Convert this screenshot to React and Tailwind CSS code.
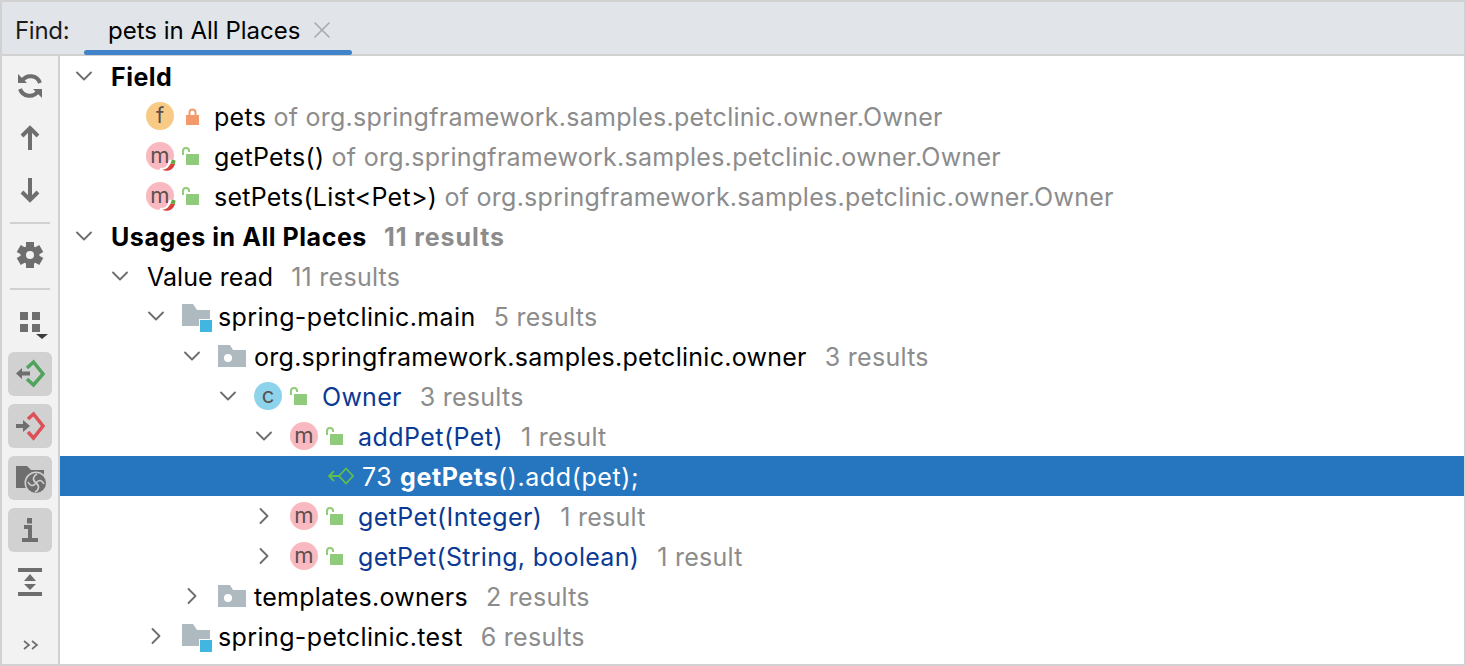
import React from 'react';
import { ChevronDown, ChevronRight, X } from 'lucide-react';

const Chevron = ({ open }) => (
  <span className="w-[51px] pl-[10px] -mt-[4px] shrink-0 flex items-center text-[#6e6e6e]">
    {open ? <ChevronDown size={28} strokeWidth={1.6} /> : <ChevronRight size={28} strokeWidth={1.6} />}
  </span>
);

const Pepper = () => (
  <svg className="absolute left-[13px] top-[13px]" width="18" height="18" viewBox="0 0 18 18">
    <path d="M1 14 C6 15 10 12 11 6 L16 6 C17 13 9 19 1 14Z" fill="#fff" stroke="#fff" strokeWidth="2.5" />
    <path d="M3 14.5 C7 15 10 12 11.5 8.5 L16 9 C15 14 9 18 3 14.5Z" fill="#d9433f" />
    <path d="M11.5 8.5 L13 4.5 L16.5 5.5 L16 9Z" fill="#62a845" />
  </svg>
);

const Badge = ({ letter, color, pepper }) => (
  <span className={`relative w-[28px] h-[28px] -ml-[1px] -mt-[4px] rounded-full shrink-0 flex items-center justify-center text-[#5a4f4f] text-[22px] tracking-normal leading-none pb-[3px] ${color}`}>
    {letter}
    {pepper && <Pepper />}
  </span>
);

const Lock = ({ closed }) => closed ? (
  <svg className="ml-[12px] -mt-[4px] shrink-0" width="13" height="17" viewBox="0 0 13 17">
    <path d="M3.5 8V4.5a3 3 0 0 1 6 0V8" fill="none" stroke="#f39a6d" strokeWidth="2" />
    <rect x="0" y="7" width="13" height="10" fill="#f39a6d" />
  </svg>
) : (
  <svg className="ml-[8px] -mt-[4px] shrink-0" width="17" height="18" viewBox="0 0 17 18">
    <path d="M1 8V4a3 3 0 0 1 6 0V5" fill="none" stroke="#8fcb7a" strokeWidth="2" />
    <rect x="4" y="7" width="13" height="11" fill="#8fcb7a" />
  </svg>
);

const ModuleIcon = () => (
  <svg className="shrink-0 -ml-[1px] -mt-[4px]" width="30" height="32" viewBox="0 0 30 32">
    <path d="M0 4H11L15 10H28V26H0Z" fill="#aeb9c0" />
    <rect x="17" y="19" width="13" height="13" fill="#fff" />
    <rect x="18" y="20" width="12" height="12" fill="#40b6e0" />
  </svg>
);

const PackageIcon = () => (
  <svg className="shrink-0 -ml-[1px] -mt-[4px]" width="28" height="22" viewBox="0 0 28 22">
    <path d="M0 0H12L15 5H28V22H0Z" fill="#aeb9c0" />
    <circle cx="10" cy="13" r="4" fill="#fff" />
  </svg>
);

const Gray = ({ children }) => <span className="text-[#8c8c8c]">{children}</span>;

const Row = ({ indent, open, children, selected }) => (
  <div className={`h-[40px] pt-[4px] flex items-center whitespace-pre ${indent} ${selected ? 'bg-[#2675bf] text-white' : ''}`}>
    {open === undefined ? <span className="w-[51px] shrink-0" /> : <Chevron open={open} />}
    {children}
  </div>
);

const ToolBtn = ({ active, children }) => (
  <div className={`w-[44px] h-[44px] rounded-[6px] ${active ? 'bg-[#d1d1d1]' : ''}`}>
    <svg width="44" height="44" viewBox="0 0 44 44" fill="#6e6e6e">{children}</svg>
  </div>
);

const Sep = ({ className }) => <div className={`w-[40px] h-[2px] bg-[#d1d1d1] ${className}`} />;

const Sidebar = () => (
  <div className="w-[56px] shrink-0 border-r-2 border-[#d1d1d1] bg-[#f2f2f2] box-content flex flex-col items-center pt-[8px] gap-2">
    <ToolBtn>
      <g transform="translate(10 10)">
        <path d="M4 7A10 10 0 0 1 22 9" fill="none" stroke="#6e6e6e" strokeWidth="4" />
        <path d="M0 0V9H9Z" />
        <path d="M20 17A10 10 0 0 1 2 15" fill="none" stroke="#6e6e6e" strokeWidth="4" />
        <path d="M24 24V15H15Z" />
      </g>
    </ToolBtn>
    <ToolBtn>
      <path d="M22 34V13M14 20L22 12L30 20" fill="none" stroke="#6e6e6e" strokeWidth="4" />
    </ToolBtn>
    <ToolBtn>
      <path d="M22 10V31M14 24L22 32L30 24" fill="none" stroke="#6e6e6e" strokeWidth="4" />
    </ToolBtn>
    <Sep className="mt-[2px] mb-[1px]" />
    <ToolBtn>
      <rect x="18" y="9" width="8" height="26" />
      <rect x="18" y="9" width="8" height="26" transform="rotate(60 22 22)" />
      <rect x="18" y="9" width="8" height="26" transform="rotate(120 22 22)" />
      <circle cx="22" cy="22" r="9.5" />
      <circle cx="22" cy="22" r="4" fill="#f2f2f2" />
    </ToolBtn>
    <Sep className="mt-[3px] mb-[2px]" />
    <ToolBtn>
      <rect x="12" y="12" width="8" height="8" />
      <rect x="24" y="12" width="8" height="8" />
      <rect x="12" y="24" width="8" height="8" />
      <rect x="24" y="24" width="8" height="8" />
      <path d="M28 34H40L34 39Z" fill="#3c3c3c" />
    </ToolBtn>
    <ToolBtn active>
      <path d="M19 16L25.5 10L35 22L25.5 33L19 27" fill="none" stroke="#4fa35d" strokeWidth="3.5" />
      <path d="M8 21.5L14 16V19.5H22V23.5H14V27Z" />
    </ToolBtn>
    <ToolBtn active>
      <path d="M20 15L25.5 10L35 22L25.5 34L20 28" fill="none" stroke="#dc5158" strokeWidth="3.5" />
      <path d="M8 20H15V16L22 22L15 28V24H8Z" />
    </ToolBtn>
    <ToolBtn active>
      <path d="M8 10H19L23 14H36V32H8Z" />
      <circle cx="28" cy="27" r="11.5" fill="#d1d1d1" />
      <circle cx="28" cy="27" r="10" />
      <path d="M28 27C24 24 25 20 29 18M28 27C31 23 34 24 36 28M28 27C32 30 31 34 27 36M28 27C25 31 22 30 20 26" fill="none" stroke="#d1d1d1" strokeWidth="1.6" />
    </ToolBtn>
    <ToolBtn active>
      <rect x="19" y="10" width="5" height="5.5" />
      <path d="M16 17H24V30H30V34H14V30H20V21H16Z" />
    </ToolBtn>
    <ToolBtn>
      <rect x="10" y="8" width="24" height="4" />
      <path d="M22 14L28 21H16Z" />
      <path d="M22 30L28 24H16Z" />
      <rect x="10" y="32" width="24" height="4" />
    </ToolBtn>
    <div className="mt-[27px] ml-[2px]">
      <svg width="16" height="12" viewBox="0 0 16 12" fill="none" stroke="#6e6e6e" strokeWidth="1.7">
        <path d="M1 2L6 6L1 10M9 2L14 6L9 10" />
      </svg>
    </div>
  </div>
);

const results = 'ml-[18px]';

const App = () => (
  <div className="w-[1466px] h-[666px] bg-white border-2 border-[#d1d1d1] flex flex-col overflow-hidden text-[25px] tracking-[0.27px] text-black font-['Inter','Liberation_Sans',sans-serif]">
    <div className="h-[52px] shrink-0 bg-[#e1e5ea] border-b-2 border-[#d1d1d1] box-content flex items-start text-[24px] tracking-normal">
      <span className="pl-[13px] pt-[11px] w-[82px] text-[#1c1c1c] tracking-[-0.3px]">Find:</span>
      <div className="relative w-[268px] h-[52px] pl-[24px] pt-[11px] flex items-start">
        pets in All Places
        <X className="ml-[8px] mt-[3px] text-[#a5abb1]" size={28} strokeWidth={1.4} />
        <div className="absolute left-0 right-0 bottom-[-1px] h-[5px] rounded-full bg-[#4083c9]" />
      </div>
    </div>
    <div className="flex flex-1 min-h-0">
      <Sidebar />
      <div className="flex-1 min-w-0">
        <Row indent="pl-0" open><span className="font-bold tracking-[0.5px]">Field</span></Row>
        <Row indent="pl-[36px]"><Badge letter="f" color="bg-[#f7cb85]" /><Lock closed /><span className="ml-[15px]">pets <Gray>of org.springframework.samples.petclinic.owner.Owner</Gray></span></Row>
        <Row indent="pl-[36px]"><Badge letter="m" color="bg-[#f8b9c1]" pepper /><Lock /><span className="ml-[15px]">getPets() <Gray>of org.springframework.samples.petclinic.owner.Owner</Gray></span></Row>
        <Row indent="pl-[36px]"><Badge letter="m" color="bg-[#f8b9c1]" pepper /><Lock /><span className="ml-[15px]">{'setPets(List<Pet>) '}<Gray>of org.springframework.samples.petclinic.owner.Owner</Gray></span></Row>
        <Row indent="pl-0" open><span className="font-bold tracking-[0.55px]">Usages in All Places</span><span className="font-bold text-[#8c8c8c] ml-[17px] tracking-[0.95px]">11 results</span></Row>
        <Row indent="pl-[36px]" open><span className="tracking-[0.05px]">Value read</span><Gray><span className={results}>11 results</span></Gray></Row>
        <Row indent="pl-[72px]" open><ModuleIcon /><span className="ml-[6px] tracking-[0.4px]">spring-petclinic.main</span><Gray><span className={results}>5 results</span></Gray></Row>
        <Row indent="pl-[108px]" open><PackageIcon /><span className="ml-[8px]">org.springframework.samples.petclinic.owner</span><Gray><span className={results}>3 results</span></Gray></Row>
        <Row indent="pl-[144px]" open><Badge letter="c" color="bg-[#8ed3ec]" /><Lock /><span className="ml-[15px] text-[#0a3a94]">Owner</span><Gray><span className={results}>3 results</span></Gray></Row>
        <Row indent="pl-[180px]" open><Badge letter="m" color="bg-[#f8b9c1]" /><Lock /><span className="ml-[15px] text-[#0a3a94] tracking-[0.45px]">addPet(Pet)</span><Gray><span className={results}>1 result</span></Gray></Row>
        <Row indent="pl-[217px]" selected>
          <svg className="shrink-0 -mt-[4px]" width="26" height="18" viewBox="0 0 26 18" fill="none" stroke="#5fbf4a" strokeWidth="1.8">
            <path d="M11 9H1M6 4L1 9L6 14" />
            <path d="M11 9L18 1.5L25 9L18 16.5Z" />
          </svg>
          <span className="ml-[8px] tracking-[0.6px]">73 <b>getPets</b>().add(pet);</span>
        </Row>
        <Row indent="pl-[180px]" open={false}><Badge letter="m" color="bg-[#f8b9c1]" /><Lock /><span className="ml-[15px] text-[#0a3a94] tracking-[0.4px]">getPet(Integer)</span><Gray><span className={results}>1 result</span></Gray></Row>
        <Row indent="pl-[180px]" open={false}><Badge letter="m" color="bg-[#f8b9c1]" /><Lock /><span className="ml-[15px] text-[#0a3a94] tracking-[0.3px]">getPet(String, boolean)</span><Gray><span className={results}>1 result</span></Gray></Row>
        <Row indent="pl-[108px]" open={false}><PackageIcon /><span className="ml-[8px]">templates.owners</span><Gray><span className={results}>2 results</span></Gray></Row>
        <Row indent="pl-[72px]" open={false}><ModuleIcon /><span className="ml-[6px] tracking-[0.4px]">spring-petclinic.test</span><Gray><span className={results}>6 results</span></Gray></Row>
      </div>
    </div>
  </div>
);

export default App;
